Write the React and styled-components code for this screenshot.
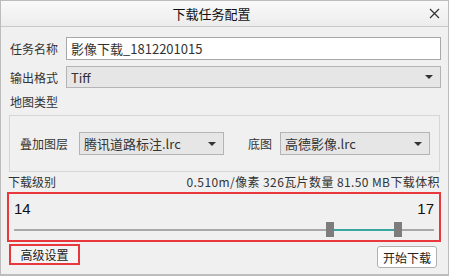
import React from 'react'
import styled, {createGlobalStyle} from 'styled-components'

const Global = createGlobalStyle`
  html, body { margin: 0; padding: 0; background: #f0f0f0; }
  body { font-family: "Noto Sans CJK SC", "Noto Sans", sans-serif; color: #222; }
`

const Window = styled.div`
  width: 449px;
  height: 276px;
  box-sizing: border-box;
  border: 1px solid #bcbcbc;
  border-bottom-width: 2px;
  background: #f0f0f0;
  display: flex;
  flex-direction: column;
`

const TitleBar = styled.div`
  height: 25px;
  display: flex;
  align-items: center;
  background: linear-gradient(#fafafa, #ececec);
  border-bottom: 1px solid #c9c9c9;
  padding-right: 2px;
`

const Title = styled.div`
  flex: 1;
  text-align: center;
  font-size: 13px;
  color: #111;
`

const Close = styled.div`
  width: 24px;
  height: 24px;
  display: flex;
  align-items: center;
  justify-content: center;
`

const Body = styled.div`
  flex: 1;
  display: flex;
  flex-direction: column;
  padding: 10px 7px 0 7px;
`

const Row = styled.div`
  display: flex;
  align-items: center;
  height: ${p => p.h || 23}px;
  margin-bottom: ${p => p.mb || 0}px;
`

const Label = styled.div`
  box-sizing: border-box;
  font-size: 12px;
  color: #333;
  width: ${p => p.w ? p.w + 'px' : 'auto'};
  padding-left: ${p => p.pl || 0}px;
  margin-left: ${p => p.ml || 0}px;
  flex-shrink: 0;
  white-space: nowrap;
`

const Input = styled.div`
  flex: 1;
  height: 100%;
  box-sizing: border-box;
  border: 1px solid #a8a8a8;
  background: #fff;
  font-size: 13px;
  color: #333;
  display: flex;
  align-items: center;
  padding-left: 4px;
`

const Combo = styled.div`
  flex: ${p => p.w ? 'none' : 1};
  width: ${p => p.w ? p.w + 'px' : 'auto'};
  height: 100%;
  box-sizing: border-box;
  border: 1px solid #b4b4b4;
  background: #e6e6e6;
  font-size: 13px;
  color: #333;
  display: flex;
  align-items: center;
  justify-content: space-between;
  padding: 0 7px 0 4px;
`

const Arrow = styled.span`
  width: 0;
  height: 0;
  border-left: 4px solid transparent;
  border-right: 4px solid transparent;
  border-top: 4px solid #333;
`

const Group = styled.div`
  margin: 0 1px 0 1px;
  height: 57px;
  box-sizing: border-box;
  border: 1px solid #d6d6d6;
  display: flex;
  align-items: center;
  padding: 0 12px 0 10px;
`

const GroupRow = styled.div`
  display: flex;
  align-items: center;
  height: 23px;
  width: 100%;
`

const Stats = styled.div`
  display: flex;
  justify-content: space-between;
  align-items: center;
  height: 18px;
  font-size: 12px;
  color: #333;
  padding-right: 1px;
`

const StatText = styled.span`
  letter-spacing: 0.4px;
`

const LevelBox = styled.div`
  margin-top: 2px;
  height: 50px;
  box-sizing: border-box;
  border: 2px solid #e8383d;
  margin-left: -1px;
  padding: 6px 5px 0 5px;
  display: flex;
  flex-direction: column;
`

const Levels = styled.div`
  display: flex;
  justify-content: space-between;
  font-family: "Liberation Sans", Arial, sans-serif;
  font-size: 15px;
  color: #111;
  line-height: 18px;
`

const Track = styled.div`
  position: relative;
  margin-top: 11px;
  height: 2px;
  background: #a9a9a9;
`

const Range = styled.div`
  position: absolute;
  top: 0;
  height: 2px;
  background: #3aa6a0;
`

const Handle = styled.div`
  position: absolute;
  top: -7px;
  width: 8px;
  height: 15px;
  background: #7d7d7d;
`

const Footer = styled.div`
  display: flex;
  justify-content: space-between;
  align-items: flex-start;
  margin-top: 2px;
`

const Advanced = styled.div`
  width: 71px;
  height: 21px;
  box-sizing: border-box;
  margin-left: 1px;
  border: 2px solid #e8383d;
  background: #f4f4f4;
  font-size: 12px;
  color: #222;
  display: flex;
  align-items: center;
  justify-content: center;
`

const Button = styled.div`
  width: 60px;
  height: 22px;
  margin-top: 2px;
  margin-right: 4px;
  box-sizing: border-box;
  border: 1px solid #b0b0b0;
  border-radius: 3px;
  background: #fff;
  font-size: 12px;
  color: #222;
  display: flex;
  align-items: center;
  justify-content: center;
`

export default function App() {
  const lo = 312
  const hi = 380
  return (
    <>
      <Global />
      <Window>
        <TitleBar>
          <Title>下载任务配置</Title>
          <Close>
            <svg width="11" height="11" viewBox="0 0 11 11">
              <path d="M1 1L10 10M10 1L1 10" stroke="#333" strokeWidth="1.2" />
            </svg>
          </Close>
        </TitleBar>
        <Body>
          <Row h={23} mb={6}>
            <Label w={58} pl={2}>任务名称</Label>
            <Input>影像下载_1812201015</Input>
          </Row>
          <Row h={22}>
            <Label w={58} pl={2}>输出格式</Label>
            <Combo>Tiff<Arrow /></Combo>
          </Row>
          <Row h={27}>
            <Label pl={2}>地图类型</Label>
          </Row>
          <Group>
            <GroupRow>
              <Label w={59}>叠加图层</Label>
              <Combo w={145}>腾讯道路标注.lrc<Arrow /></Combo>
              <Label w={32} ml={24}>底图</Label>
              <Combo w={150}>高德影像.lrc<Arrow /></Combo>
            </GroupRow>
          </Group>
          <Stats>
            <span>下载级别</span>
            <StatText>0.510m/像素 326瓦片数量 81.50 MB下载体积</StatText>
          </Stats>
          <LevelBox>
            <Levels>
              <span>14</span>
              <span>17</span>
            </Levels>
            <Track>
              <Range style={{left: lo + 4, width: hi - lo}} />
              <Handle style={{left: lo}} />
              <Handle style={{left: hi}} />
            </Track>
          </LevelBox>
          <Footer>
            <Advanced>高级设置</Advanced>
            <Button>开始下载</Button>
          </Footer>
        </Body>
      </Window>
    </>
  )
}
